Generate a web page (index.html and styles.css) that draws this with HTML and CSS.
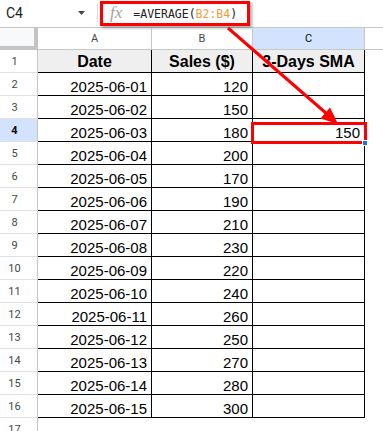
FILE: index.html
```html
<!DOCTYPE html>
<html>
<head>
<meta charset="utf-8">
<link rel="stylesheet" href="styles.css">
</head>
<body>
<div class="page">
  <div class="toolbar">
    <div class="namebox">
      <span class="ref">C4</span>
      <svg class="caret" width="7" height="4" viewBox="0 0 7 4"><path d="M0 0H7L3.5 4Z" fill="#444746"/></svg>
    </div>
    <div class="sep"></div>
    <div class="fbox">
      <span class="fx">fx</span>
      <span class="formula">=AVERAGE(<span class="rng">B2:B4</span>)</span>
    </div>
  </div>

  <div class="sheet">
    <div class="corner"></div>
    <div class="colhead">A</div>
    <div class="colhead">B</div>
    <div class="colhead sel">C</div>
    <div class="colhead last"></div>

    <div class="rowhead">1</div>
    <div class="cell hdr">Date</div>
    <div class="cell hdr">Sales ($)</div>
    <div class="cell hdr">3-Days SMA</div>
    <div class="dcell"></div>

    <div class="rowhead">2</div><div class="cell">2025-06-01</div><div class="cell">120</div><div class="cell"></div><div class="dcell"></div>
    <div class="rowhead">3</div><div class="cell">2025-06-02</div><div class="cell">150</div><div class="cell"></div><div class="dcell"></div>
    <div class="rowhead sel">4</div><div class="cell">2025-06-03</div><div class="cell">180</div><div class="cell">150</div><div class="dcell"></div>
    <div class="rowhead">5</div><div class="cell">2025-06-04</div><div class="cell">200</div><div class="cell"></div><div class="dcell"></div>
    <div class="rowhead">6</div><div class="cell">2025-06-05</div><div class="cell">170</div><div class="cell"></div><div class="dcell"></div>
    <div class="rowhead">7</div><div class="cell">2025-06-06</div><div class="cell">190</div><div class="cell"></div><div class="dcell"></div>
    <div class="rowhead">8</div><div class="cell">2025-06-07</div><div class="cell">210</div><div class="cell"></div><div class="dcell"></div>
    <div class="rowhead">9</div><div class="cell">2025-06-08</div><div class="cell">230</div><div class="cell"></div><div class="dcell"></div>
    <div class="rowhead">10</div><div class="cell">2025-06-09</div><div class="cell">220</div><div class="cell"></div><div class="dcell"></div>
    <div class="rowhead">11</div><div class="cell">2025-06-10</div><div class="cell">240</div><div class="cell"></div><div class="dcell"></div>
    <div class="rowhead">12</div><div class="cell">2025-06-11</div><div class="cell">260</div><div class="cell"></div><div class="dcell"></div>
    <div class="rowhead">13</div><div class="cell">2025-06-12</div><div class="cell">250</div><div class="cell"></div><div class="dcell"></div>
    <div class="rowhead">14</div><div class="cell">2025-06-13</div><div class="cell">270</div><div class="cell"></div><div class="dcell"></div>
    <div class="rowhead">15</div><div class="cell">2025-06-14</div><div class="cell">280</div><div class="cell"></div><div class="dcell"></div>
    <div class="rowhead">16</div><div class="cell">2025-06-15</div><div class="cell">300</div><div class="cell"></div><div class="dcell"></div>

    <div class="rowhead">17</div><div class="ecell"></div><div class="ecell"></div><div class="ecell"></div><div class="ecell"></div>
  </div>

  <div class="selbox"></div>
  <div class="redbox"></div>
  <div class="handle"></div>
  <svg class="arrow" width="383" height="431" viewBox="0 0 383 431">
    <line x1="228" y1="28" x2="327" y2="114" stroke="#ff0000" stroke-width="3"/>
    <polygon points="338,124 320.5,118.5 330,107.5" fill="#ff0000"/>
  </svg>
</div>
</body>
</html>
```

FILE: styles.css
```css
* { box-sizing: border-box; }
html, body { margin: 0; padding: 0; background: #fff; }
.page {
  position: relative;
  width: 383px;
  height: 431px;
  overflow: hidden;
  font-family: Roboto, "Liberation Sans", Arial, sans-serif;
}
.toolbar {
  height: 28px;
  border-bottom: 1px solid #c4c7c5;
  display: flex;
  align-items: flex-start;
}
.namebox {
  width: 97px;
  height: 26px;
  display: flex;
  align-items: center;
  padding-left: 6px;
}
.ref { font-size: 14px; color: #202124; }
.caret { margin-left: auto; margin-right: 12px; }
.sep {
  width: 1px;
  height: 18px;
  margin-top: 4px;
  background: #dadce0;
}
.fbox {
  margin-left: 2px;
  margin-top: 1px;
  width: 150px;
  height: 25px;
  border: 3px solid #ff0000;
  display: flex;
  align-items: center;
  padding-left: 7px;
  box-shadow: 2px 2px 3px rgba(0,0,0,0.35);
  background: #fff;
}
.fx {
  font-family: "Liberation Serif", serif;
  font-style: italic;
  font-size: 17px;
  color: #a0a3a6;
  line-height: 1;
  margin-top: -2px;
}
.formula {
  margin-left: 11px;
  font-family: "DejaVu Sans Mono", "Liberation Mono", monospace;
  font-size: 11.5px;
  color: #202124;
}
.rng { color: #f09c3a; }

.sheet {
  display: grid;
  grid-template-columns: 38px 114px 101px 112px 18px;
  grid-template-rows: 22px repeat(17, 23px);
}
.corner {
  background: #f8f9fa;
  border-right: 4px solid #c4c4c4;
  border-bottom: 4px solid #c4c4c4;
}
.colhead {
  border-right: 1px solid #c4c7c5;
  border-bottom: 1px solid #c4c7c5;
  display: flex;
  align-items: center;
  justify-content: center;
  font-size: 11px;
  color: #444746;
}
.colhead.last { border-right: none; }
.colhead.sel { background: #d3e3fd; color: #0b0b0b; }
.rowhead {
  border-right: 1px solid #c4c7c5;
  border-bottom: 1px solid #e1e1e1;
  display: flex;
  align-items: center;
  justify-content: center;
  padding-right: 8px;
  font-size: 11px;
  color: #444746;
}
.rowhead.sel { background: #d3e3fd; color: #0b0b0b; font-weight: bold; }
.cell {
  border-right: 1px solid #000;
  border-bottom: 1px solid #000;
  display: flex;
  align-items: flex-end;
  justify-content: flex-end;
  padding: 0 4px;
  font-family: "Liberation Sans", Arial, sans-serif;
  font-size: 15px;
  line-height: 17px;
  color: #000;
}
.cell.hdr {
  background: #efefef;
  font-weight: bold;
  font-size: 16px;
  align-items: center;
  justify-content: center;
}
.dcell, .ecell { background: #fff; }

.selbox {
  position: absolute;
  left: 253px;
  top: 141px;
  width: 112px;
  height: 2px;
  background: #1a73e8;
}
.redbox {
  position: absolute;
  left: 251px;
  top: 122px;
  width: 116px;
  height: 22px;
  border: 3px solid #ff0000;
}
.handle {
  position: absolute;
  left: 362px;
  top: 140px;
  width: 6px;
  height: 6px;
  background: #1a73e8;
  border: 1px solid #fff;
}
.arrow {
  position: absolute;
  left: 0;
  top: 0;
  pointer-events: none;
}
```
